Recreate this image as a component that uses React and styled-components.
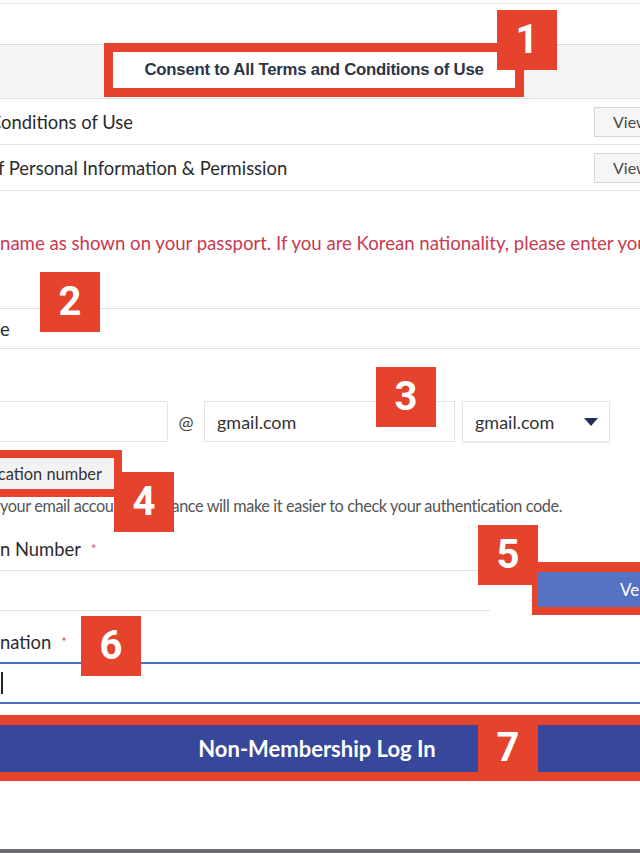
import React from "react";
import styled, { createGlobalStyle } from "styled-components";

const RED = "#e5432b";

const GlobalStyle = createGlobalStyle`
  html, body { margin: 0; padding: 0; background: #fff; }
  body { font-family: Lato, "Noto Sans", sans-serif; color: #333; }
  * { box-sizing: border-box; }
`;

const Page = styled.div`
  position: relative;
  width: 640px;
  height: 853px;
  overflow: hidden;
  display: flex;
  flex-direction: column;
  background: #fff;
`;

const TopRule = styled.div`
  height: 4px;
  flex-shrink: 0;
  border-bottom: 1px solid #e4e4e4;
`;

const ConsentBar = styled.div`
  margin-top: 40px;
  height: 55px;
  flex-shrink: 0;
  background: #f4f4f4;
  border-top: 1px solid #dcdcdc;
  border-bottom: 1px solid #e2e2e2;
  padding-left: 104px;
  display: flex;
  align-items: flex-start;
`;

const ConsentBox = styled.div`
  margin-top: -2px;
  width: 420px;
  height: 54px;
  border: 9px solid ${RED};
  background: #fff;
  display: flex;
  align-items: center;
  justify-content: center;
  font-family: "Liberation Sans", Arial, sans-serif;
  font-weight: 700;
  font-size: 16.8px;
  color: #2c3547;
  letter-spacing: -0.25px;
  white-space: nowrap;
`;

const TermRow = styled.div`
  height: 46px;
  flex-shrink: 0;
  border-bottom: 1px solid #e3e3e3;
  display: flex;
  align-items: center;
  justify-content: space-between;
`;

const TermLabel = styled.span`
  font-size: 18.4px;
  color: #2b2b2b;
  white-space: nowrap;
  margin-left: ${(p) => p.$shift || 0}px;
`;

const ViewButton = styled.div`
  width: 60px;
  height: 30px;
  margin-right: -14px;
  border: 1px solid #d6d6d6;
  background: #f6f6f6;
  padding-left: 18px;
  display: flex;
  align-items: center;
  font-size: 16px;
  color: #4a4a4a;
`;

const Notice = styled.p`
  margin: 40px 0 0;
  line-height: 24px;
  font-size: 18.6px;
  color: #c83a50;
  white-space: nowrap;
`;

const FieldRow = styled.div`
  margin-top: ${(p) => p.$mt}px;
  height: 41px;
  flex-shrink: 0;
  border-top: 1px solid #e2e2e2;
  border-bottom: 1px solid #e2e2e2;
  display: flex;
  align-items: center;
  font-size: 18.4px;
  color: #2b2b2b;
`;

const EmailRow = styled.div`
  margin-top: 52px;
  height: 41px;
  flex-shrink: 0;
  display: flex;
  align-items: stretch;
`;

const TextBox = styled.div`
  width: ${(p) => p.$w}px;
  margin-left: ${(p) => p.$ml || 0}px;
  flex-shrink: 0;
  border: 1px solid #e3e3e3;
  background: #fff;
  padding-left: 12px;
  display: flex;
  align-items: center;
  font-size: 18px;
  color: #333;
`;

const At = styled.span`
  width: 36px;
  flex-shrink: 0;
  display: flex;
  align-items: center;
  justify-content: center;
  font-size: 18px;
  color: #444;
`;

const SelectBox = styled.div`
  width: 148px;
  margin-left: 7px;
  flex-shrink: 0;
  border: 1px solid #e4e4e4;
  box-shadow: 0 1px 2px rgba(0, 0, 0, 0.07);
  padding: 0 11px 0 12px;
  display: flex;
  align-items: center;
  justify-content: space-between;
  font-size: 18px;
  color: #333;
`;

const AuthRow = styled.div`
  margin-top: 8px;
  flex-shrink: 0;
  display: flex;
`;

const AuthButton = styled.div`
  width: 182px;
  margin-left: -60px;
  height: 47px;
  border: 8px solid ${RED};
  background: #f2f2f2;
  display: flex;
  align-items: center;
  justify-content: flex-end;
  padding-right: 12px;
  font-size: 16.4px;
  color: #333;
  white-space: nowrap;
  overflow: hidden;
`;

const Helper = styled.p`
  margin: 0;
  line-height: 18px;
  font-size: 16.3px;
  letter-spacing: -0.4px;
  color: #555;
  white-space: nowrap;
`;

const Label = styled.div`
  margin-top: ${(p) => p.$mt}px;
  height: 24px;
  flex-shrink: 0;
  display: flex;
  align-items: center;
  font-size: 18.4px;
  color: #2b2b2b;
  white-space: nowrap;
`;

const Required = styled.span`
  color: #d8496a;
  font-size: 13px;
  margin-left: 10px;
`;

const AuthNumberRow = styled.div`
  margin-top: 9px;
  height: 41px;
  flex-shrink: 0;
  display: flex;
  align-items: center;
`;

const PlainField = styled.div`
  flex: 1;
  align-self: stretch;
  border-top: 1px solid #e2e2e2;
  border-bottom: 1px solid #e2e2e2;
`;

const VerifyWrap = styled.div`
  width: 108px;
  flex-shrink: 0;
  margin-left: 42px;
  height: 53px;
  margin-top: -4px;
  border-style: solid;
  border-color: ${RED};
  border-width: 10px 0 8px 6px;
  background: #5672c2;
  padding-left: 82px;
  display: flex;
  align-items: center;
  font-size: 17px;
  color: #fff;
  white-space: nowrap;
`;

const FocusedInput = styled.div`
  margin: 8px -4px 0;
  height: 42px;
  flex-shrink: 0;
  border: 2px solid #4a70c0;
  padding-left: 3px;
  display: flex;
  align-items: center;
`;

const Caret = styled.span`
  width: 2px;
  height: 22px;
  background: #222;
`;

const LoginWrap = styled.div`
  margin: 11px -10px 0;
  height: 66px;
  flex-shrink: 0;
  border-style: solid;
  border-color: ${RED};
  border-width: 10px 10px 9px;
  background: #37479b;
  display: flex;
  align-items: center;
  justify-content: center;
  padding-right: 6px;
  font-size: 22px;
  font-weight: 700;
  color: #fff;
`;

const BottomBar = styled.div`
  margin-top: auto;
  height: 4px;
  flex-shrink: 0;
  background: #6c6c70;
`;

const Badge = styled.div`
  position: absolute;
  left: ${(p) => p.$x}px;
  top: ${(p) => p.$y}px;
  width: 60px;
  height: 60px;
  background: ${RED};
  color: #fff;
  display: flex;
  align-items: center;
  justify-content: center;
  font-family: Roboto, "Liberation Sans", sans-serif;
  font-weight: 700;
  font-size: 40px;
  line-height: 1;
`;

const Triangle = () => (
  <svg width="14" height="8" viewBox="0 0 14 8">
    <path d="M0 0 H14 L7 8 Z" fill="#1f2f5a" />
  </svg>
);

const badges = [
  { n: 1, x: 497, y: 10 },
  { n: 2, x: 40, y: 272 },
  { n: 3, x: 376, y: 367 },
  { n: 4, x: 114, y: 472 },
  { n: 5, x: 478, y: 525 },
  { n: 6, x: 81, y: 616 },
  { n: 7, x: 478, y: 718 },
];

export default function App() {
  return (
    <>
      <GlobalStyle />
      <Page>
        <TopRule />
        <ConsentBar>
          <ConsentBox>Consent to All Terms and Conditions of Use</ConsentBox>
        </ConsentBar>
        <TermRow>
          <TermLabel $shift={-11}>Conditions of Use</TermLabel>
          <ViewButton>View</ViewButton>
        </TermRow>
        <TermRow>
          <TermLabel $shift={-2}>f Personal Information &amp; Permission</TermLabel>
          <ViewButton>View</ViewButton>
        </TermRow>
        <Notice>
          name as shown on your passport. If you are Korean nationality, please enter your
        </Notice>
        <FieldRow $mt={53}>e</FieldRow>
        <EmailRow>
          <TextBox $w={200} $ml={-32} />
          <At>@</At>
          <TextBox $w={251}>gmail.com</TextBox>
          <SelectBox>
            <span>gmail.com</span>
            <Triangle />
          </SelectBox>
        </EmailRow>
        <AuthRow>
          <AuthButton>cation number</AuthButton>
        </AuthRow>
        <Helper>
          your email account in advance will make it easier to check your authentication code.
        </Helper>
        <Label $mt={22}>
          n Number<Required>*</Required>
        </Label>
        <AuthNumberRow>
          <PlainField />
          <VerifyWrap>Verify</VerifyWrap>
        </AuthNumberRow>
        <Label $mt={19}>
          nation<Required>*</Required>
        </Label>
        <FocusedInput>
          <Caret />
        </FocusedInput>
        <LoginWrap>Non-Membership Log In</LoginWrap>
        <BottomBar />
        {badges.map((b) => (
          <Badge key={b.n} $x={b.x} $y={b.y}>
            {b.n}
          </Badge>
        ))}
      </Page>
    </>
  );
}
